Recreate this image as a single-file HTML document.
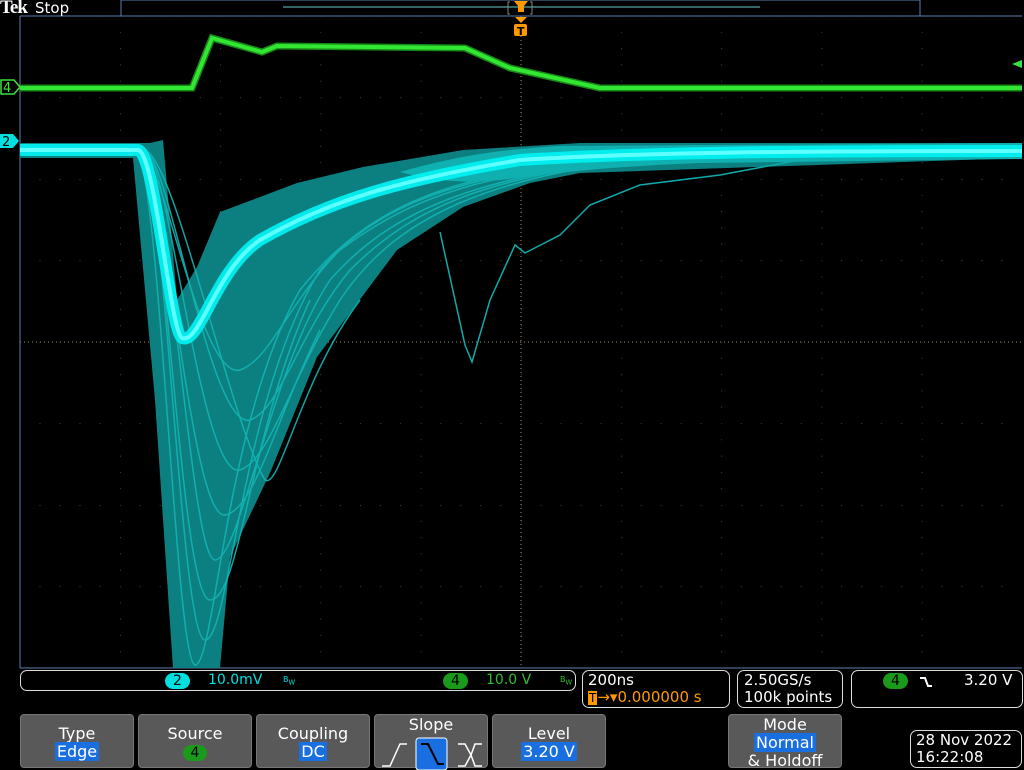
<!DOCTYPE html>
<html><head><meta charset="utf-8"><style>
body{margin:0;background:#000;width:1024px;height:768px;overflow:hidden;position:relative;font-family:"DejaVu Sans","Liberation Sans",sans-serif;color:#fff}
.a{position:absolute}
.btn{position:absolute;top:714px;height:54px;background:#595959;border:1px solid #777;border-radius:4px;text-align:center;font-size:16px;line-height:18px;box-sizing:border-box}
.hl{background:#1a6fe0;padding:0 2px}
.box{position:absolute;border:1px solid #ddd;border-radius:7px;box-sizing:border-box}
</style></head><body>
<svg class="a" style="left:0;top:0" width="1024" height="768">
<defs><pattern id="g" x="20" y="16" width="100.2" height="81.5" patternUnits="userSpaceOnUse">
<g fill="#777"><circle cx="0" cy="0" r="0.8"/><circle cx="20" cy="0" r="0.6"/><circle cx="40" cy="0" r="0.6"/><circle cx="60" cy="0" r="0.6"/><circle cx="80" cy="0" r="0.6"/><circle cx="0" cy="16.3" r="0.6"/><circle cx="0" cy="32.6" r="0.6"/><circle cx="0" cy="48.9" r="0.6"/><circle cx="0" cy="65.2" r="0.6"/></g></pattern></defs>
<rect x="20" y="16" width="1002" height="652" fill="url(#g)"/>
<line x1="20" y1="342" x2="1022" y2="342" stroke="#a08a60" stroke-dasharray="1,3"/>
<line x1="521" y1="16" x2="521" y2="668" stroke="#a08a60" stroke-dasharray="1,3"/>
<line x1="20" y1="16" x2="20" y2="668" stroke="#5a7fb0"/>
<line x1="20" y1="668" x2="1022" y2="668" stroke="#5a7fb0"/>
<line x1="20" y1="16" x2="1022" y2="16" stroke="#5a7fb0"/>
<rect x="121" y="0" width="799" height="16" fill="none" stroke="#5a7fb0"/>
<line x1="283" y1="7" x2="760" y2="7" stroke="#6cc"/>
<path d="M20,88 L192,88 L212,38 L262,52 L277,46 L465,48 L510,68 L600,88 L1022,88" fill="none" stroke="#168a16" stroke-width="7"/>
<path d="M20,88 L192,88 L212,38 L262,52 L277,46 L465,48 L510,68 L600,88 L1022,88" fill="none" stroke="#33e633" stroke-width="4"/>
<path d="M20,143 L150,143 L163,140 L177,300 L197,267 L220,212 L297,183 L363,167 L463,150 L580,143 L1022,143 L1022,158 L580,173 L530,183 L463,207 L397,250 L317,357 L270,473 L230,557 L220,668 L173,668 L155,400 L133,158 L20,158Z" fill="#0c7f80"/>
<g fill="none" stroke="#13b5b5" stroke-width="1.5" opacity="0.9">
<path d="M135,150 C160,160 175,660 195,665 C215,665 225,420 300,290 C380,190 480,165 700,152"/>
<path d="M140,150 C165,160 180,640 205,640 C230,640 240,400 320,270 C390,190 490,168 700,152"/>
<path d="M140,150 C170,160 190,560 215,560 C240,560 270,370 330,280 C400,200 500,170 700,152"/>
<path d="M145,150 C170,160 200,480 240,470 C270,460 290,380 340,300 C400,210 500,172 700,152"/>
<path d="M145,150 C170,160 210,430 250,420 C280,410 300,330 350,270 C420,200 500,172 700,152"/>
<path d="M140,150 C165,160 200,380 240,370 C270,360 290,300 340,250 C420,190 500,168 700,152"/>
<path d="M140,150 C165,160 180,600 210,600 C240,600 250,430 310,300"/>
<path d="M140,150 C165,160 190,520 225,515 C255,510 275,420 320,330"/>
<path d="M145,150 C175,160 230,420 265,480 C280,490 300,380 360,300"/>
</g>
<path d="M440,232 L465,345 L472,362 L490,300 L515,245 L525,253 L560,235 L590,205 L640,185 L720,175 L800,160" fill="none" stroke="#1aa" stroke-width="1.5"/>
<path d="M400,172 C450,158 490,150 560,146 L1022,143 L1022,159 L700,163 C620,166 560,172 500,180 C460,184 430,180 400,172Z" fill="#10b0b0"/>
<path d="M20,150 L138,150 C155,152 170,330 182,338 C200,345 215,270 260,240 C330,200 400,180 520,160 C650,152 800,151 1022,151" fill="none" stroke="#00f0f0" stroke-width="12" opacity="0.95"/>
<path d="M20,150 L138,150 C155,152 170,330 182,338 C200,345 215,270 260,240 C330,200 400,180 520,160 C650,152 800,151 1022,151" fill="none" stroke="#60ffff" stroke-width="4"/>
<path d="M1,80 L14,80 L20,87 L14,94 L1,94Z" fill="#000" stroke="#3ee03e" stroke-width="1.5"/>
<text x="3" y="92" font-size="13" fill="#3ee03e" font-family="DejaVu Sans">4</text>
<path d="M0,134 L13,134 L19,141 L13,148 L0,148Z" fill="#00e0e0"/>
<text x="2" y="146" font-size="13" fill="#000" font-family="DejaVu Sans">2</text>
<path d="M1022,60 L1012,64 L1022,68Z" fill="#3ee03e"/>
<path d="M514,1 L528,1 L524,6 L524,12 L518,12 L518,6Z" fill="#f90"/>
<path d="M510,2 L508,2 L508,14 L510,14 M530,2 L532,2 L532,14 L530,14" stroke="#887" fill="none"/>
<path d="M515,17 L527,17 L521,23Z" fill="#f90"/>
<rect x="514" y="24" width="13" height="12" rx="2" fill="#f90"/>
<text x="517" y="35" font-size="11" font-weight="bold" fill="#000">T</text>
</svg>
<div class="a" style="left:0;top:-3px;font-family:'Liberation Serif',serif;font-weight:bold;font-size:19px;letter-spacing:-1px">Tek</div>
<div class="a" style="left:35px;top:-1px;font-size:15px">Stop</div>
<div class="box" style="left:20px;top:670px;width:556px;height:21px"></div>
<div class="a" style="left:165px;top:673px;width:25px;height:16px;background:#00e0e0;border-radius:8px;color:#000;text-align:center;font-size:14px;line-height:16px">2</div>
<div class="a" style="left:208px;top:672px;font-size:14px;color:#00e0e0">10.0mV</div>
<div class="a" style="left:283px;top:675px;font-size:8px;color:#00e0e0">B<sub>W</sub></div>
<div class="a" style="left:443px;top:673px;width:25px;height:16px;background:#1a9a1a;border-radius:8px;color:#000;text-align:center;font-size:14px;line-height:16px">4</div>
<div class="a" style="left:486px;top:672px;font-size:14px;color:#2ec02e">10.0 V</div>
<div class="a" style="left:560px;top:675px;font-size:8px;color:#2ec02e">B<sub>W</sub></div>
<div class="box" style="left:582px;top:670px;width:148px;height:38px"></div>
<div class="a" style="left:588px;top:671px;font-size:15px">200ns</div>
<div class="a" style="left:588px;top:688px;font-size:15px;color:#f90"><span style="background:#f90;color:#000;font-size:12px;padding:0 1px">T</span>→▾0.000000 s</div>
<div class="box" style="left:737px;top:670px;width:106px;height:38px"></div>
<div class="a" style="left:744px;top:671px;font-size:15px">2.50GS/s</div>
<div class="a" style="left:744px;top:688px;font-size:15px">100k points</div>
<div class="box" style="left:851px;top:670px;width:172px;height:38px"></div>
<div class="a" style="left:883px;top:673px;width:25px;height:16px;background:#1a9a1a;border-radius:8px;color:#000;text-align:center;font-size:14px;line-height:16px">4</div>
<svg class="a" style="left:918px;top:674px" width="16" height="16"><path d="M2,4 L7,4 L10,12 L14,12" stroke="#fff" stroke-width="2" fill="none"/></svg>
<div class="a" style="left:964px;top:671px;font-size:15px">3.20 V</div>
<div class="btn" style="left:20px;width:114px;padding-top:10px">Type<br><span class="hl">Edge</span></div>
<div class="btn" style="left:138px;width:114px;padding-top:10px">Source<br><span style="background:#1a9a1a;color:#000;border-radius:8px;padding:0 8px;font-size:14px">4</span></div>
<div class="btn" style="left:256px;width:114px;padding-top:10px">Coupling<br><span class="hl">DC</span></div>
<div class="btn" style="left:374px;width:114px;padding-top:1px">Slope
<svg width="110" height="34" style="display:block;margin-top:2px"><path d="M7,30 L15,30 L25,8 L32,8" stroke="#fff" fill="none" stroke-width="1.5"/><rect x="41" y="2" width="31" height="32" rx="3" fill="#1a6fe0" stroke="#fff"/><path d="M46,8 L53,8 L63,28 L69,28" stroke="#000" fill="none" stroke-width="2"/><path d="M83,8 L90,8 L96,19 L90,30 L83,30 M107,8 L100,8 L96,19 L100,30 L107,30" stroke="#fff" fill="none" stroke-width="1.5"/></svg></div>
<div class="btn" style="left:492px;width:114px;padding-top:10px">Level<br><span class="hl">3.20 V</span></div>
<div class="btn" style="left:728px;width:114px;padding-top:1px">Mode<br><span class="hl">Normal</span><br>&amp; Holdoff</div>
<div class="box" style="left:910px;top:730px;width:112px;height:38px"></div>
<div class="a" style="left:916px;top:731px;font-size:15px">28 Nov 2022</div>
<div class="a" style="left:916px;top:748px;font-size:15px">16:22:08</div>
</body></html>
